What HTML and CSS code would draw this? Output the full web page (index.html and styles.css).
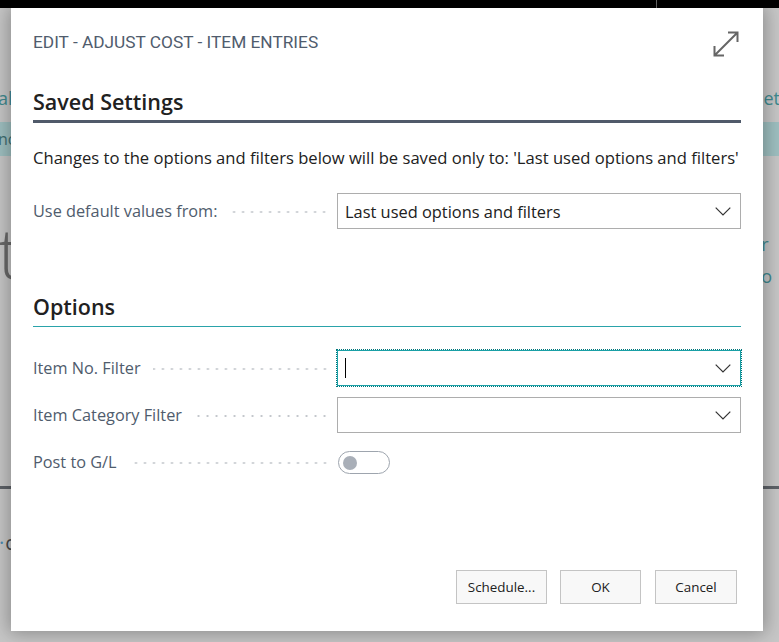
FILE: index.html
```html
<!DOCTYPE html>
<html lang="en">
<head>
<meta charset="utf-8">
<title>Edit - Adjust Cost - Item Entries</title>
<link rel="stylesheet" href="styles.css">
</head>
<body>
<div class="topbar"><span class="topbar-divider"></span></div>
<div class="bg">
  <div class="bg-nav"><span class="bg-nav-left">al</span><span class="bg-nav-right">etu</span></div>
  <div class="bg-band"><span class="bg-band-left">no</span></div>
  <div class="bg-hero">
    <span class="bg-big">t</span>
    <span class="bg-links"><span>r</span><span>o</span></span>
  </div>
  <div class="bg-rule"></div>
  <div class="bg-c"><span class="bg-dot">·</span>c</div>
</div>

<div class="dialog">
  <div class="dlg-header">
    <span class="dlg-title">EDIT - ADJUST COST - ITEM ENTRIES</span>
    <svg class="dlg-expand" width="26" height="26" viewBox="0 0 26 26" aria-hidden="true">
      <path d="M1.5 24.5 L24.5 1.5 M15 1.5 H24.5 V11 M1.5 15 V24.5 H11" fill="none" stroke="#666" stroke-width="2"/>
    </svg>
  </div>

  <h2 class="section-title section-title--saved">Saved Settings</h2>
  <p class="info-text">Changes to the options and filters below will be saved only to: 'Last used options and filters'</p>
  <div class="field-row field-row--first">
    <div class="field-label"><span>Use default values from:</span><span class="leader"></span></div>
    <div class="select">
      <span class="select-value">Last used options and filters</span>
      <svg class="chevron" width="16" height="9" viewBox="0 0 16 9"><path d="M0.7 0.7 L8 8 L15.3 0.7" fill="none" stroke="#333" stroke-width="1.2"/></svg>
    </div>
  </div>

  <h2 class="section-title section-title--options">Options</h2>
  <div class="field-row field-row--opt1">
    <div class="field-label"><span>Item No. Filter</span><span class="leader"></span></div>
    <div class="select select--focus">
      <span class="caret"></span>
      <svg class="chevron" width="16" height="9" viewBox="0 0 16 9"><path d="M0.7 0.7 L8 8 L15.3 0.7" fill="none" stroke="#333" stroke-width="1.2"/></svg>
    </div>
  </div>
  <div class="field-row">
    <div class="field-label"><span>Item Category Filter</span><span class="leader"></span></div>
    <div class="select">
      <span class="select-value"></span>
      <svg class="chevron" width="16" height="9" viewBox="0 0 16 9"><path d="M0.7 0.7 L8 8 L15.3 0.7" fill="none" stroke="#333" stroke-width="1.2"/></svg>
    </div>
  </div>
  <div class="field-row">
    <div class="field-label"><span>Post to G/L</span><span class="leader"></span></div>
    <div class="toggle-cell"><span class="toggle"><span class="toggle-knob"></span></span></div>
  </div>

  <div class="dlg-footer">
    <button class="btn btn--schedule">Schedule...</button>
    <button class="btn btn--ok">OK</button>
    <button class="btn btn--cancel">Cancel</button>
  </div>
</div>
</body>
</html>
```

FILE: styles.css
```css
html, body {
  margin: 0;
  padding: 0;
}
body {
  width: 779px;
  height: 642px;
  overflow: hidden;
  position: relative;
  background: #c7c7c7;
  font-family: "Open Sans", "Noto Sans", "Liberation Sans", sans-serif;
}

/* ---------- dimmed background page ---------- */
.topbar {
  height: 8px;
  background: #000;
  display: flex;
}
.topbar-divider {
  margin-left: 656px;
  width: 1px;
  background: #707070;
}
.bg {
  display: flex;
  flex-direction: column;
}
.bg-nav {
  margin-top: 76px;
  height: 28px;
  display: flex;
  justify-content: space-between;
  align-items: center;
  font-size: 18px;
  color: #3f8a90;
}
.bg-nav-left { margin-left: -2px; }
.bg-nav-right { margin-right: -12px; }
.bg-band {
  margin-top: 10px;
  height: 34px;
  background: #9fc0c1;
  display: flex;
  align-items: center;
  font-size: 16px;
  color: #3f6f73;
}
.bg-band-left { margin-left: -2px; }
.bg-hero {
  height: 330px;
  display: flex;
  justify-content: space-between;
  align-items: flex-start;
}
.bg-big {
  margin-top: 56px;
  margin-left: -2px;
  font-size: 70px;
  font-weight: 300;
  line-height: 80px;
  color: #6a6a6a;
}
.bg-links {
  margin-top: 72px;
  margin-right: 7px;
  display: flex;
  flex-direction: column;
  font-size: 18px;
  line-height: 32px;
  color: #3f8a90;
}
.bg-rule {
  height: 3px;
  background: #5e6268;
}
.bg-c {
  margin-top: 40px;
  font-size: 20px;
  color: #4a4a4a;
  display: flex;
  align-items: center;
}
.bg-dot {
  color: #4a8ab0;
  margin-right: 1px;
  margin-left: -1px;
}

/* ---------- dialog ---------- */
.dialog {
  position: absolute;
  left: 11px;
  top: 8px;
  width: 752px;
  height: 623px;
  box-sizing: border-box;
  padding: 0 22px 27px;
  background: #fff;
  box-shadow: 0 0 18px 2px rgba(0, 0, 0, 0.32);
  display: flex;
  flex-direction: column;
}
.dlg-header {
  margin-top: 23px;
  height: 26px;
  display: flex;
  justify-content: space-between;
  align-items: center;
}
.dlg-title {
  font-family: Roboto, "Liberation Sans", sans-serif;
  font-size: 17.3px;
  color: #505c6d;
  padding-bottom: 4px;
}
.dlg-expand {
  margin-right: 2px;
}

.section-title {
  margin: 0;
  font-size: 21.5px;
  line-height: 28px;
  font-weight: 600;
  color: #212121;
}
.section-title--saved {
  margin-top: 31px;
  padding-bottom: 4px;
  border-bottom: 3px solid #505a6a;
}
.section-title--options {
  margin-top: 64px;
  padding-bottom: 5px;
  border-bottom: 1px solid #2aa3aa;
}
.info-text {
  margin: 25px 0 0;
  font-size: 16.6px;
  line-height: 20px;
  color: #212121;
  white-space: nowrap;
}

.field-row {
  display: grid;
  grid-template-columns: 304px 1fr;
  align-items: center;
  height: 36px;
  margin-top: 11px;
}
.field-row--first { margin-top: 25px; }
.field-row--opt1 { margin-top: 23px; }

.field-label {
  display: flex;
  align-items: center;
  font-size: 16.3px;
  color: #505c6d;
}
.leader {
  flex: 1;
  height: 4px;
  margin: 2px 8px 0 12px;
  background-image: radial-gradient(circle, #c2c6cb 0.9px, transparent 1.3px);
  background-size: 9px 4px;
  background-position: right center;
  background-repeat: repeat-x;
}

.select {
  box-sizing: border-box;
  height: 36px;
  border: 1px solid #adadad;
  display: flex;
  align-items: center;
  padding: 0 9px 0 7px;
  background: #fff;
}
.select-value {
  flex: 1;
  font-size: 16.4px;
  color: #212121;
}
.select--focus {
  border: 1px solid #1aa0a6;
  outline: 1px dotted #00767b;
  outline-offset: 0;
}
.caret {
  width: 1px;
  height: 20px;
  background: #000;
  margin-right: auto;
}
.chevron { flex: none; }

.toggle-cell {
  display: flex;
  align-items: center;
}
.toggle {
  box-sizing: border-box;
  width: 52px;
  height: 23px;
  margin-left: 1px;
  margin-top: 1px;
  border: 1px solid #9ea5ae;
  border-radius: 12px;
  display: flex;
  align-items: center;
  padding-left: 4px;
}
.toggle-knob {
  width: 14px;
  height: 14px;
  border-radius: 50%;
  background: #a9afb8;
}

.dlg-footer {
  margin-top: auto;
  display: flex;
  justify-content: flex-end;
  gap: 13px;
  padding-right: 4px;
}
.btn {
  box-sizing: border-box;
  height: 34px;
  padding: 0;
  background: #f8f8f8;
  border: 1px solid #c4c4c4;
  font-family: "Open Sans", "Noto Sans", sans-serif;
  font-size: 13.4px;
  color: #212121;
}
.btn--schedule { width: 91px; }
.btn--ok { width: 81px; }
.btn--cancel { width: 82px; margin-left: 1px; }
```
